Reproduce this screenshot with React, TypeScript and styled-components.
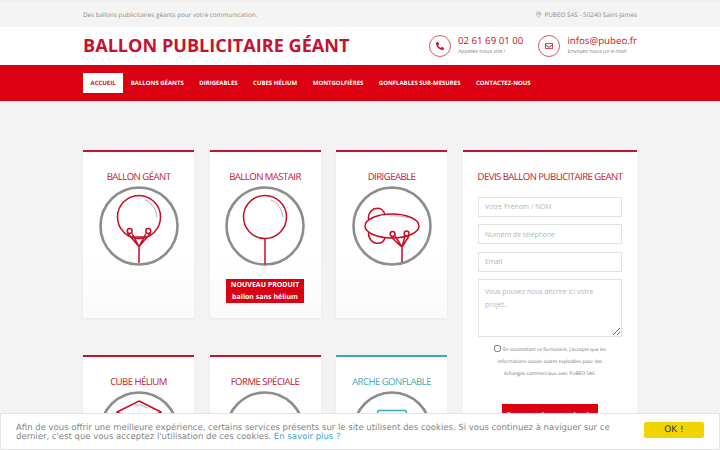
import React from 'react';
import styled, { createGlobalStyle } from 'styled-components';
import { FaPhone, FaRegEnvelope } from 'react-icons/fa';
import { MapPin } from 'lucide-react';

const RED = '#db0012';
const TITLE_RED = '#c4122f';
const LINE_RED = '#cc0a22';
const TEAL = '#3fa9b5';

const GlobalStyle = createGlobalStyle`
  html, body {
    margin: 0;
    padding: 0;
    height: 450px;
    overflow: hidden;
    background: #f3f3f3;
    font-family: 'Open Sans', 'Liberation Sans', sans-serif;
    text-rendering: geometricPrecision;
  }
  * { box-sizing: border-box; }
`;

const Container = styled.div`
  width: 554px;
  margin: 0 0 0 83px;
`;

const TopBar = styled.div`
  height: 27px;
  background: #f4f4f4;
  border-top: 1px solid #efefef;
`;

const TopInner = styled(Container)`
  height: 100%;
  display: flex;
  justify-content: space-between;
  align-items: center;
  font-size: 6.3px;
  color: #8a8a8a;
`;

const Address = styled.span`
  display: flex;
  align-items: center;
  gap: 2px;
`;

const Header = styled.div`
  height: 38px;
  background: #fff;
`;

const HeaderInner = styled(Container)`
  height: 100%;
  display: flex;
  align-items: center;
  justify-content: space-between;
`;

const Logo = styled.div`
  font-size: 18.1px;
  font-weight: 700;
  color: ${TITLE_RED};
  white-space: nowrap;
`;

const Contacts = styled.div`
  display: flex;
  gap: 15px;
`;

const Contact = styled.div`
  display: flex;
  align-items: center;
  gap: 7px;
`;

const IconRing = styled.div`
  width: 22px;
  height: 22px;
  border: 1px solid #d05a6c;
  border-radius: 50%;
  display: flex;
  align-items: center;
  justify-content: center;
  color: ${TITLE_RED};
  font-size: 8px;
`;

const ContactText = styled.div`
  display: flex;
  flex-direction: column;
  gap: 1px;
  margin-top: -2px;
`;

const ContactMain = styled.div`
  font-size: 9.7px;
  line-height: 12px;
  color: ${TITLE_RED};
  white-space: nowrap;
`;

const ContactSub = styled.div`
  font-size: 5.4px;
  line-height: 7px;
  color: #8a8a8a;
  white-space: nowrap;
`;

const Nav = styled.div`
  height: 36px;
  background: ${RED};
`;

const NavInner = styled(Container)`
  height: 100%;
  display: flex;
  align-items: center;
`;

const NavItem = styled.div<{ $active?: boolean }>`
  height: 20px;
  padding: 0 ${(p) => (p.$active ? '7.5px' : '7.75px')};
  display: flex;
  align-items: center;
  font-size: 6px;
  font-weight: 700;
  white-space: nowrap;
  background: ${(p) => (p.$active ? '#fff' : 'transparent')};
  color: ${(p) => (p.$active ? TITLE_RED : '#fff')};
`;

const Main = styled(Container)`
  margin-top: 49px;
  display: flex;
  gap: 16px;
  align-items: flex-start;
`;

const Grid = styled.div`
  width: 364px;
  display: grid;
  grid-template-columns: repeat(3, 111px);
  column-gap: 15.5px;
  row-gap: 37px;
`;

const Card = styled.div<{ $accent?: string }>`
  height: 168px;
  background: linear-gradient(#fff 60%, #fafafa);
  border-top: 2.5px solid ${(p) => p.$accent || '#c4122f'};
  box-shadow: 0 1px 3px rgba(0, 0, 0, 0.05);
  display: flex;
  flex-direction: column;
  align-items: center;
  padding-top: 18px;
`;

const CardTitle = styled.div<{ $accent?: string }>`
  font-size: 9.6px;
  line-height: 14px;
  letter-spacing: -0.55px;
  color: ${(p) => p.$accent || TITLE_RED};
  white-space: nowrap;
`;

const Illustration = styled.svg`
  display: block;
  width: 80px;
  height: 80px;
  margin-top: 2px;
`;

const Badge = styled.div`
  margin-top: 13px;
  width: 78px;
  height: 24px;
  padding-top: 0.5px;
  background: ${RED};
  color: #fff;
  font-size: 7px;
  font-weight: 700;
  line-height: 12px;
  text-align: center;
`;

const FormCard = styled.div`
  width: 174px;
  height: 400px;
  background: #fff;
  border-top: 2.5px solid #c4122f;
  padding: 18px 15px 0;
  display: flex;
  flex-direction: column;
  align-items: center;
`;

const FormTitle = styled(CardTitle)`
  margin-bottom: 12.5px;
`;

const Input = styled.input`
  display: block;
  width: 144px;
  height: 20px;
  margin-bottom: 7.5px;
  padding: 0 6px;
  border: 1px solid #e2e2e2;
  background: #fff;
  font-family: inherit;
  font-size: 6.8px;
  outline: none;
  &::placeholder {
    color: #b5b5b5;
  }
`;

const TextArea = styled.textarea`
  display: block;
  width: 144px;
  height: 58px;
  padding: 5px 6px;
  border: 1px solid #e2e2e2;
  background: #fff;
  font-family: inherit;
  font-size: 6.8px;
  line-height: 13px;
  outline: none;
  &::placeholder {
    color: #b5b5b5;
  }
`;

const Consent = styled.div`
  margin-top: 7px;
  width: 118px;
  font-size: 4.8px;
  line-height: 12px;
  color: #777;
  text-align: center;
`;

const Check = styled.input`
  width: 7px;
  height: 7px;
  margin: 0 2px 0 0;
  vertical-align: -0.5px;
`;

const Submit = styled.div`
  margin-top: 24px;
  width: 96px;
  height: 22px;
  background: ${RED};
  color: #fff;
  font-size: 9px;
  font-weight: 700;
  display: flex;
  align-items: center;
  justify-content: center;
`;

const CookieBar = styled.div`
  position: fixed;
  left: 0;
  right: 0;
  bottom: 0;
  height: 37px;
  background: #fff;
  border: 1px solid #e4e4e4;
  display: flex;
  align-items: center;
  justify-content: space-between;
  padding: 0 15px;
`;

const CookieText = styled.div`
  width: 600px;
  padding-top: 3px;
  font-family: 'DejaVu Sans', sans-serif;
  font-size: 8.5px;
  line-height: 9px;
  color: #868686;
`;

const CookieLink = styled.span`
  color: #3f9fcf;
`;

const OkButton = styled.div`
  width: 60px;
  height: 16px;
  margin-bottom: 4px;
  border-radius: 2px;
  background: #f2d500;
  color: #333;
  font-family: 'DejaVu Sans', sans-serif;
  font-size: 9px;
  display: flex;
  align-items: center;
  justify-content: center;
`;

const Ring = () => <circle cx="40" cy="40" r="38.5" fill="none" stroke="#8d8d8d" strokeWidth="2.6" />;

const Shine = ({ d }: { d: string }) => <path d={d} fill="none" stroke="#9a9a9a" strokeWidth="0.8" />;

const BalloonGiant = () => (
  <Illustration viewBox="0 0 80 80">
    <Ring />
    <g fill="none" stroke={LINE_RED} strokeWidth="1.5">
      <circle cx="40" cy="31" r="21.5" />
      <circle cx="30.7" cy="45" r="2.4" />
      <circle cx="49.3" cy="45" r="2.4" />
      <path d="M28.4 47 L40 60.5 L51.6 47 M33 47.5 L40 60.5 L47 47.5 M33 51 L47 51 M40 60.5 V77" />
    </g>
    <Shine d="M46 14 C52 16 57 23 58 31" />
  </Illustration>
);

const BalloonMast = () => (
  <Illustration viewBox="0 0 80 80">
    <Ring />
    <g fill="none" stroke={LINE_RED} strokeWidth="1.5">
      <circle cx="40" cy="31" r="21.5" />
      <path d="M40 52.5 V78.5" />
    </g>
    <Shine d="M46 14 C52 16 57 23 58 31" />
  </Illustration>
);

const Airship = () => (
  <Illustration viewBox="0 0 80 80">
    <Ring />
    <g fill="none" stroke={LINE_RED} strokeWidth="1.5">
      <ellipse cx="40" cy="40" rx="27" ry="12" />
      <path d="M16.6 34 C15.5 27 20 22.3 26 22.3 C29 22.3 32 25 33 29" />
      <path d="M16.6 46.3 C16 52 20 57.3 26 57.3 C29 57.3 32 55 33 51.7" />
      <circle cx="40.6" cy="48" r="2.4" />
      <circle cx="54.6" cy="47.5" r="2.4" />
      <path d="M39 51 L50 61 L57 50 M43 50 L50 61 L53 50 M50 61 V76" />
    </g>
    <Shine d="M38 30 C44 29.5 50 30 57 32" />
  </Illustration>
);

const Cube = () => (
  <Illustration viewBox="0 0 80 80">
    <Ring />
    <g fill="none" stroke={LINE_RED} strokeWidth="1.5">
      <path d="M40 10 L62 21 V47 L40 58 L18 47 V21 Z M18 21 L40 32 L62 21 M40 32 V58 M40 58 V76" />
    </g>
    <Shine d="M36 14 L42 14 L48 17" />
  </Illustration>
);

const SpecialShape = () => (
  <Illustration viewBox="0 0 80 80">
    <Ring />
    <g fill="none" stroke={LINE_RED} strokeWidth="1.5">
      <path d="M40 56 C20 42 22 26 32 26 C36 26 39 29 40 32 C41 29 44 26 48 26 C58 26 60 42 40 56 Z M40 56 V76" />
    </g>
  </Illustration>
);

const Arch = () => (
  <Illustration viewBox="0 0 80 80">
    <Ring />
    <g fill="none" stroke={TEAL} strokeWidth="1.5">
      <rect x="25.5" y="19.5" width="29" height="36" rx="2" />
      <path d="M32 55 V34 C32 24 48 24 48 34 V55" />
    </g>
  </Illustration>
);

const App = () => (
  <>
    <GlobalStyle />
    <TopBar>
      <TopInner>
        <span>Des ballons publicitaires géants pour votre communication.</span>
        <Address>
          <MapPin size={7} strokeWidth={1.5} />
          PUBEO SAS - 50240 Saint-James
        </Address>
      </TopInner>
    </TopBar>
    <Header>
      <HeaderInner>
        <Logo>BALLON PUBLICITAIRE GÉANT</Logo>
        <Contacts>
          <Contact>
            <IconRing><FaPhone style={{ transform: 'scaleX(-1)' }} /></IconRing>
            <ContactText>
              <ContactMain>02 61 69 01 00</ContactMain>
              <ContactSub>Appelez-nous vite !</ContactSub>
            </ContactText>
          </Contact>
          <Contact>
            <IconRing><FaRegEnvelope /></IconRing>
            <ContactText>
              <ContactMain>infos@pubeo.fr</ContactMain>
              <ContactSub>Envoyez nous un e-mail</ContactSub>
            </ContactText>
          </Contact>
        </Contacts>
      </HeaderInner>
    </Header>
    <Nav>
      <NavInner>
        <NavItem $active>ACCUEIL</NavItem>
        <NavItem>BALLONS GÉANTS</NavItem>
        <NavItem>DIRIGEABLES</NavItem>
        <NavItem>CUBES HÉLIUM</NavItem>
        <NavItem>MONTGOLFIÈRES</NavItem>
        <NavItem>GONFLABLES SUR-MESURES</NavItem>
        <NavItem>CONTACTEZ-NOUS</NavItem>
      </NavInner>
    </Nav>
    <Main>
      <Grid>
        <Card>
          <CardTitle>BALLON GÉANT</CardTitle>
          <BalloonGiant />
        </Card>
        <Card>
          <CardTitle>BALLON MASTAIR</CardTitle>
          <BalloonMast />
          <Badge>NOUVEAU PRODUIT<br />ballon sans hélium</Badge>
        </Card>
        <Card>
          <CardTitle>DIRIGEABLE</CardTitle>
          <Airship />
        </Card>
        <Card>
          <CardTitle>CUBE HÉLIUM</CardTitle>
          <Cube />
        </Card>
        <Card>
          <CardTitle>FORME SPÉCIALE</CardTitle>
          <SpecialShape />
        </Card>
        <Card $accent={TEAL}>
          <CardTitle $accent={TEAL}>ARCHE GONFLABLE</CardTitle>
          <Arch />
        </Card>
      </Grid>
      <FormCard>
        <FormTitle>DEVIS BALLON PUBLICITAIRE GEANT</FormTitle>
        <Input placeholder="Votre Prénom / NOM" />
        <Input placeholder="Numéro de téléphone" />
        <Input placeholder="Email" />
        <TextArea placeholder="Vous pouvez nous décrire ici votre projet.." />
        <Consent>
          <Check type="checkbox" />
          En soumettant ce formulaire, j'accepte que les informations saisies soient exploitées pour des échanges commerciaux avec PUBEO SAS.
        </Consent>
        <Submit>Demander un devis</Submit>
      </FormCard>
    </Main>
    <CookieBar>
      <CookieText>
        Afin de vous offrir une meilleure expérience, certains services présents sur le site utilisent des cookies. Si vous continuez à naviguer sur ce dernier, c'est que vous acceptez l'utilisation de ces cookies. <CookieLink>En savoir plus ?</CookieLink>
      </CookieText>
      <OkButton>OK !</OkButton>
    </CookieBar>
  </>
);

export default App;
